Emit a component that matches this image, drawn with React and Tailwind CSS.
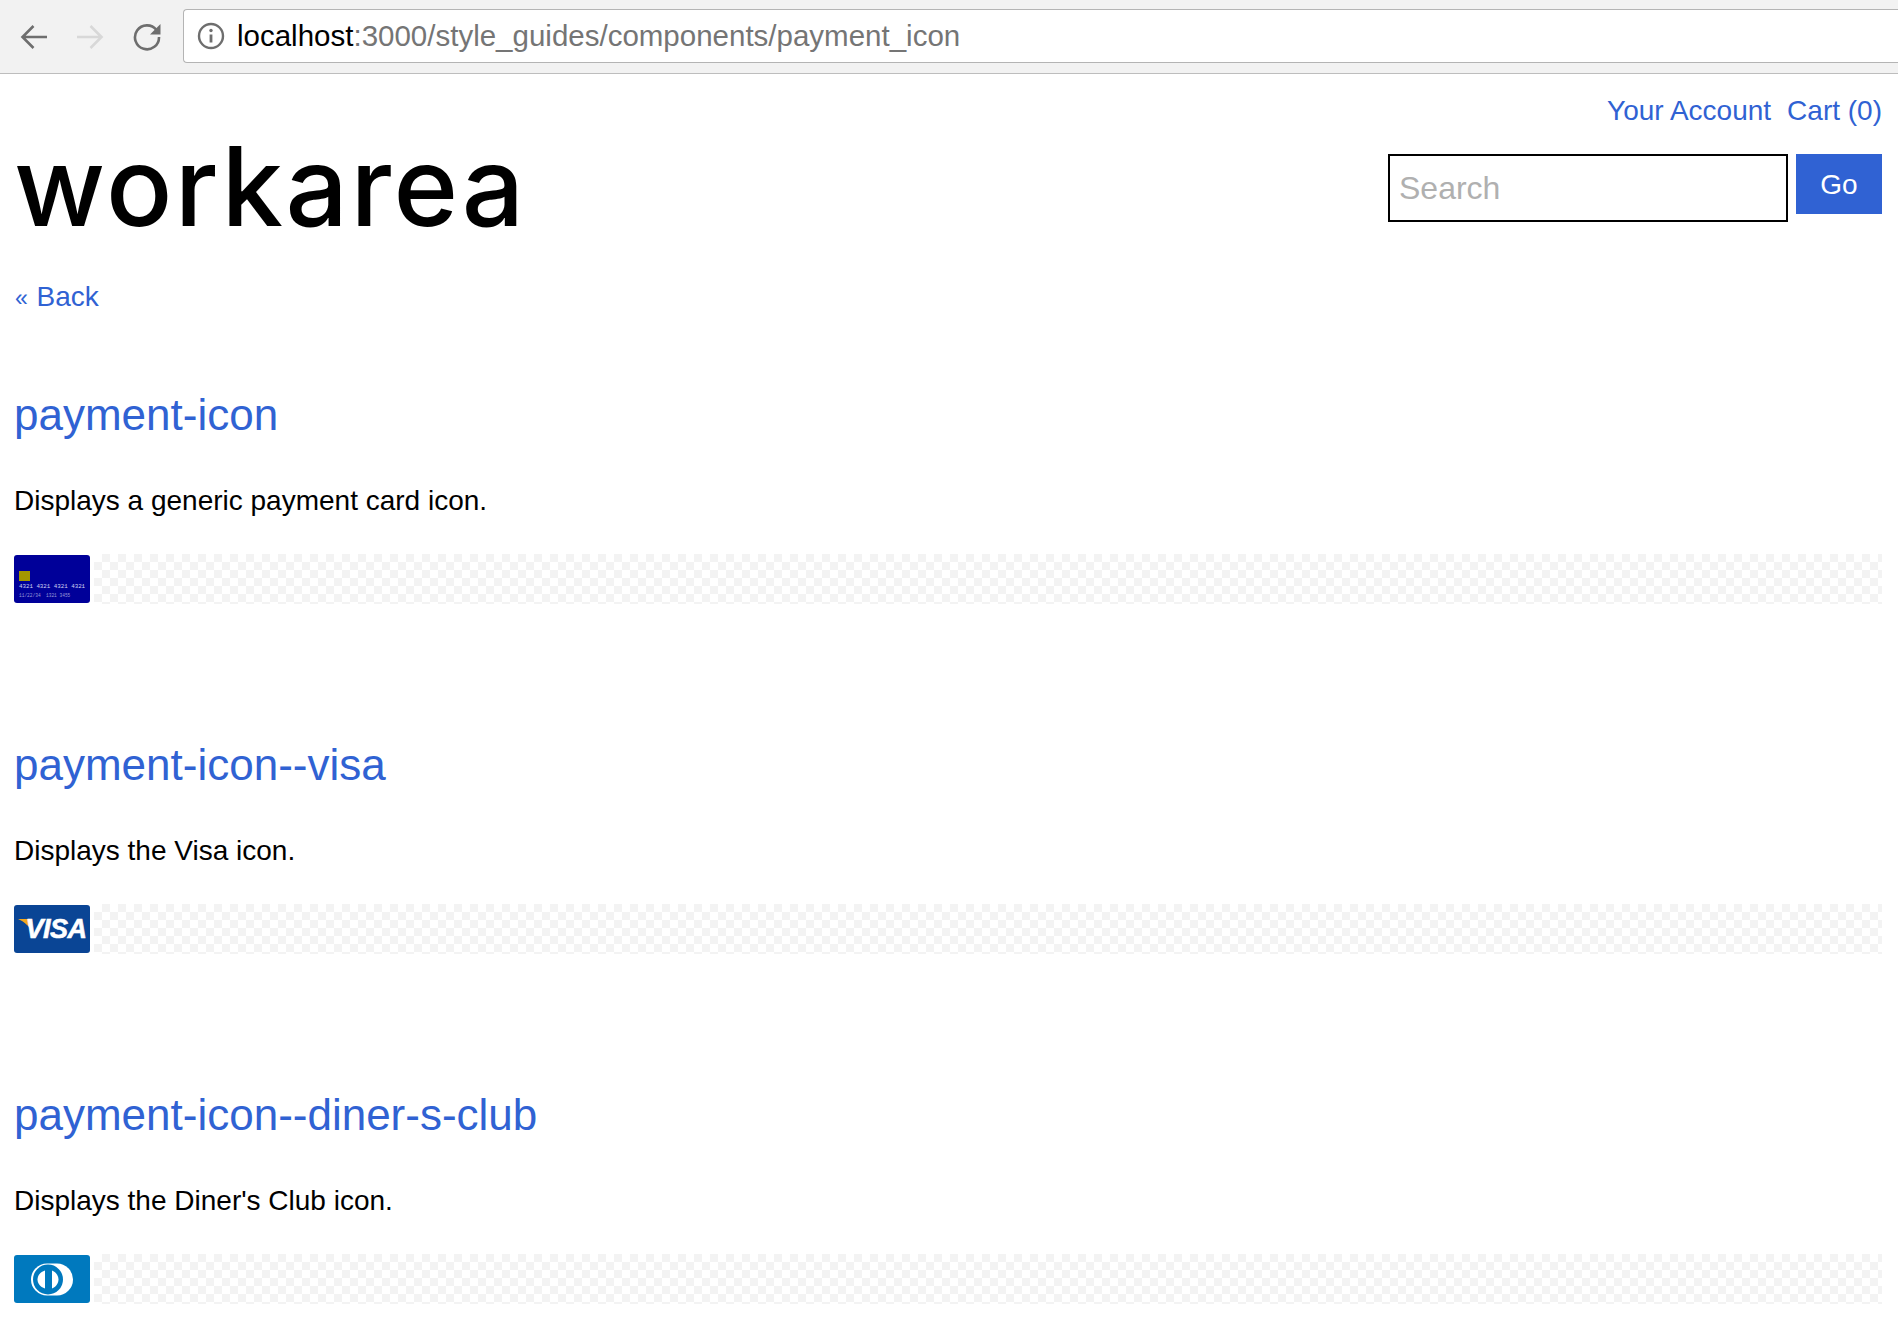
const sections = [
  { title: "payment-icon", text: "Displays a generic payment card icon.", card: "generic" },
  { title: "payment-icon--visa", text: "Displays the Visa icon.", card: "visa" },
  { title: "payment-icon--diner-s-club", text: "Displays the Diner's Club icon.", card: "diners" },
];

const GenericCard = () => (
  <div className="w-[76px] h-[48px] rounded-[3px] bg-[#000099] pt-[16px] pl-[5px] overflow-hidden font-['Liberation_Mono',monospace]">
    <div className="w-[11px] h-[10px] bg-[#a39600]"></div>
    <div className="mt-[2px] text-[5.8px] leading-[7px] text-[#d0d0f0] whitespace-nowrap">
      4321 4321 4321 4321
    </div>
    <div className="mt-[3px] text-[4.5px] leading-[5px] text-[#9a9ad8] whitespace-nowrap">
      11/22/34 &nbsp;1321 3455
    </div>
  </div>
);

const VisaCard = () => (
  <div className="relative w-[76px] h-[48px] rounded-[3px] bg-[#0a4595] flex items-center justify-center overflow-hidden">
    <svg className="absolute left-[4px] top-[14px]" width="15" height="14" viewBox="0 0 15 14">
      <path d="M0 0 H9 C11 0 12 1 12.5 3 L15 14 C12 8 7 3 0 0 Z" fill="#f4a81d" />
    </svg>
    <span className="relative pl-[8px] text-[27px] leading-none font-bold italic text-white tracking-[-0.5px] [-webkit-text-stroke:0.6px_white]">
      VISA
    </span>
  </div>
);

const DinersCard = () => (
  <div className="w-[76px] h-[48px] rounded-[3px] bg-[#0079be] flex items-center justify-center">
    <svg width="42" height="33" viewBox="0 0 42 33">
      <path d="M16 .5 H26 a16 16 0 0 1 0 32 H16 a16 16 0 0 1 0-32 Z" fill="#fff" />
      <circle cx="17" cy="16.5" r="15" fill="#0079be" />
      <path d="M14 7.5 C9 9 6.5 13 6.5 16.5 C6.5 20 9 24 14 25.5 Z" fill="#fff" />
      <path d="M21 7.5 C25 9 27.5 13 27.5 16.5 C27.5 20 25 24 21 25.5 Z" fill="#fff" />
    </svg>
  </div>
);

const cards = { generic: GenericCard, visa: VisaCard, diners: DinersCard };

const BackArrow = ({ className, flip }) => (
  <svg width="30" height="30" viewBox="0 0 30 30" fill="none" stroke="currentColor" strokeWidth="2.6" className={className}>
    <path d={flip ? "M2 15 H26 M15.5 4 L26.5 15 L15.5 26" : "M28 15 H4 M14.5 4 L3.5 15 L14.5 26"} />
  </svg>
);

const Reload = () => (
  <svg width="30" height="30" viewBox="0 0 30 30" fill="none" className="ml-[27px] text-[#6e6e6e]">
    <path d="M24.5 8 A12 12 0 1 0 27 15" stroke="currentColor" strokeWidth="2.6" />
    <path d="M28.5 2 V12.5 H18 Z" fill="currentColor" />
  </svg>
);

const InfoCircle = () => (
  <svg width="28" height="28" viewBox="0 0 28 28" fill="none" className="text-[#6e6e6e]">
    <circle cx="14" cy="14" r="12" stroke="currentColor" strokeWidth="2.4" />
    <path d="M14 12.5 V20.5" stroke="currentColor" strokeWidth="2.8" />
    <circle cx="14" cy="8.5" r="1.7" fill="currentColor" />
  </svg>
);

export default function App() {
  return (
    <div className="w-[1898px] h-[1318px] overflow-hidden bg-white font-['Liberation_Sans',Arial,sans-serif] text-black">
      <div className="h-[74px] bg-[#f2f2f2] border-b border-[#bdbdbd] flex items-center pl-[19px]">
        <BackArrow className="text-[#6e6e6e]" />
        <BackArrow flip className="ml-[26px] text-[#d8d8d8]" />
        <Reload />
        <div className="ml-[21px] -mt-[1px] flex-1 h-[54px] bg-white border border-[#b4b4b4] border-r-0 rounded-l-[4px] flex items-center pl-[13px]">
          <InfoCircle />
          <div className="ml-[12px] pt-[1px] text-[29.5px] text-[#757575]">
            <span className="text-black">localhost</span>:3000/style_guides/components/payment_icon
          </div>
        </div>
      </div>

      <div className="pl-[14px] pr-[16px]">
        <div className="flex justify-end pt-[19px] gap-[16px] text-[28px] leading-[36px] text-[#3062d3]">
          <a>Your Account</a>
          <a>Cart (0)</a>
        </div>
        <div className="flex justify-between items-start mt-[25px]">
          <div className="-mt-[28px] h-[92px] font-['Inter',sans-serif] font-medium text-[110px] leading-[120px] tracking-[2.5px]">
            workarea
          </div>
          <div className="flex gap-[8px]">
            <div className="w-[400px] h-[68px] border-[2px] border-black pl-[9px] pb-[1px] flex items-center text-[32px] text-[#b0b0b0]">
              Search
            </div>
            <button className="w-[86px] h-[60px] pt-[2px] bg-[#3062d3] text-white text-[28px]">Go</button>
          </div>
        </div>
        <div className="mt-[57px] pl-[1px] text-[28px] leading-[36px] text-[#3062d3]">
          <span className="text-[23px] mr-[1px]">«</span> Back
        </div>

        {sections.map((s, i) => {
          const Card = cards[s.card];
          return (
            <section key={i} className={i === 0 ? "mt-[71px]" : "mt-[133px]"}>
              <h1 className="text-[44px] leading-[56px] text-[#3062d3]">{s.title}</h1>
              <p className="mt-[40px] text-[28px] leading-[36px]">{s.text}</p>
              <div className="mt-[35px] h-[50px] flex bg-[conic-gradient(#f3f3f3_25%,#ffffff_0_50%,#f3f3f3_0_75%,#ffffff_0)] bg-[length:16px_16px]">
                <div className="w-[80px] h-full bg-white pt-[1px]">
                  <Card />
                </div>
              </div>
            </section>
          );
        })}
      </div>
    </div>
  );
}
